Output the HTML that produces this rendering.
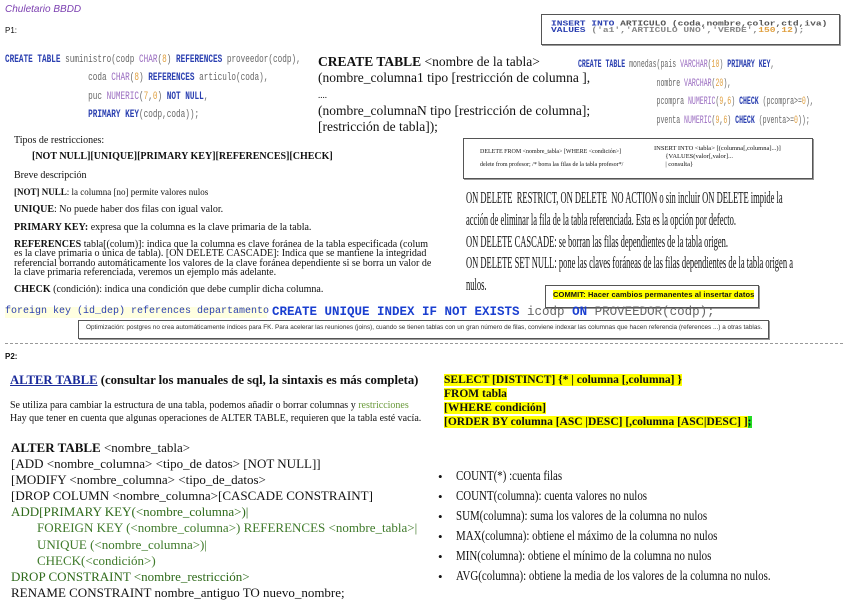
<!DOCTYPE html>
<html><head><meta charset="utf-8"><style>
body{margin:0;width:848px;height:599px;background:#fff;position:relative;overflow:hidden;font-family:"Liberation Serif",serif;color:#111}
.a{position:absolute;white-space:nowrap;line-height:1}
.mono{font-family:"Liberation Mono",monospace}
.sans{font-family:"Liberation Sans",sans-serif}
.kw{color:#2a3fb0;font-weight:bold}
.ty{color:#9a6cc0}
.nu{color:#e0a040}
.cd{color:#666}
.box{position:absolute;border:1px solid #555;box-shadow:1px 1px 0 #999;background:#fff}
.hl{background:#ffff00}
.cond{transform-origin:0 0}
.g1{color:#2e6a1a}.g2{color:#3f7a2a}
</style></head><body>
<div class="a sans" style="left:5px;top:5px;font-size:10px;color:#7b3fb0;font-style:italic">Chuletario BBDD</div>
<div class="a sans" style="left:5px;top:27px;font-size:8px">P1:</div>

<div class="a mono cond cd" style="left:5px;top:51px;font-size:11px;line-height:18.3px;transform:scaleX(0.7)">
<span class="kw">CREATE TABLE</span> suministro(codp <span class="ty">CHAR</span>(<span class="nu">8</span>) <span class="kw">REFERENCES</span> proveedor(codp),<br>
&nbsp;&nbsp;&nbsp;&nbsp;&nbsp;&nbsp;&nbsp;&nbsp;&nbsp;&nbsp;&nbsp;&nbsp;&nbsp;&nbsp;&nbsp;&nbsp;&nbsp;&nbsp;coda <span class="ty">CHAR</span>(<span class="nu">8</span>) <span class="kw">REFERENCES</span> articulo(coda),<br>
&nbsp;&nbsp;&nbsp;&nbsp;&nbsp;&nbsp;&nbsp;&nbsp;&nbsp;&nbsp;&nbsp;&nbsp;&nbsp;&nbsp;&nbsp;&nbsp;&nbsp;&nbsp;puc <span class="ty">NUMERIC</span>(<span class="nu">7</span>,<span class="nu">0</span>) <span class="kw">NOT NULL</span>,<br>
&nbsp;&nbsp;&nbsp;&nbsp;&nbsp;&nbsp;&nbsp;&nbsp;&nbsp;&nbsp;&nbsp;&nbsp;&nbsp;&nbsp;&nbsp;&nbsp;&nbsp;&nbsp;<span class="kw">PRIMARY KEY</span>(codp,coda));</div>

<div class="a" style="left:318px;top:54px;font-size:13.5px;line-height:15.8px">
<b>CREATE TABLE</b> &lt;nombre de la tabla&gt;<br>(nombre_columna1 tipo [restricción de columna ],<br><span style="font-size:9px">....</span><br>(nombre_columnaN tipo [restricción de columna];<br>[restricción de tabla]);</div>

<div class="box" style="left:541px;top:14px;width:297px;height:29px"></div>
<div class="a mono cond" style="left:551px;top:20px;font-size:9.6px;line-height:9px;font-weight:bold;transform:scaleY(0.75)">
<span style="color:#2a3fb0">INSERT INTO</span> <span style="color:#555">ARTICULO (coda,nombre,color,ctd,iva)</span><br><span style="color:#2a3fb0">VALUES</span> <span style="color:#888">('a1','ARTICULO UNO','VERDE',<span class="nu">150</span>,<span class="nu">12</span>);</span></div>

<div class="a mono cond cd" style="left:578px;top:56px;font-size:11px;line-height:18.7px;transform:scaleX(0.595)">
<span class="kw">CREATE TABLE</span> monedas(pais <span class="ty">VARCHAR</span>(<span class="nu">10</span>) <span class="kw">PRIMARY KEY</span>,<br>
&nbsp;&nbsp;&nbsp;&nbsp;&nbsp;&nbsp;&nbsp;&nbsp;&nbsp;&nbsp;&nbsp;&nbsp;&nbsp;&nbsp;&nbsp;&nbsp;&nbsp;&nbsp;&nbsp;&nbsp;nombre <span class="ty">VARCHAR</span>(<span class="nu">20</span>),<br>
&nbsp;&nbsp;&nbsp;&nbsp;&nbsp;&nbsp;&nbsp;&nbsp;&nbsp;&nbsp;&nbsp;&nbsp;&nbsp;&nbsp;&nbsp;&nbsp;&nbsp;&nbsp;&nbsp;&nbsp;pcompra <span class="ty">NUMERIC</span>(<span class="nu">9</span>,<span class="nu">6</span>) <span class="kw">CHECK</span> (pcompra&gt;=<span class="nu">0</span>),<br>
&nbsp;&nbsp;&nbsp;&nbsp;&nbsp;&nbsp;&nbsp;&nbsp;&nbsp;&nbsp;&nbsp;&nbsp;&nbsp;&nbsp;&nbsp;&nbsp;&nbsp;&nbsp;&nbsp;&nbsp;pventa <span class="ty">NUMERIC</span>(<span class="nu">9</span>,<span class="nu">6</span>) <span class="kw">CHECK</span> (pventa&gt;=<span class="nu">0</span>));</div>

<div class="box" style="left:463px;top:138px;width:348px;height:39px"></div>
<div class="a" style="left:480px;top:146px;font-size:6px;line-height:13px">DELETE FROM &lt;nombre_tabla&gt; [WHERE &lt;condición&gt;]<br>delete from profesor; /* borra las filas de la tabla profesor*/</div>
<div class="a" style="left:654px;top:145px;font-size:6.5px;line-height:8px">INSERT INTO &lt;tabla&gt; [(columna[,columna]...)]<br>&nbsp;&nbsp;&nbsp;&nbsp;&nbsp;&nbsp;&nbsp;{VALUES(valor[,valor]...<br>&nbsp;&nbsp;&nbsp;&nbsp;&nbsp;&nbsp;&nbsp;| consulta}</div>

<div class="a" style="left:14px;top:136px;font-size:10px">Tipos de restricciones:</div>
<div class="a" style="left:32px;top:152px;font-size:10px;font-weight:bold">[NOT NULL][UNIQUE][PRIMARY KEY][REFERENCES][CHECK]</div>
<div class="a" style="left:14px;top:171px;font-size:10px">Breve descripción</div>
<div class="a" style="left:14px;top:188px;font-size:9px"><b>[NOT] NULL</b>: la columna [no] permite valores nulos</div>
<div class="a" style="left:14px;top:205px;font-size:10px"><b>UNIQUE</b>: No puede haber dos filas con igual valor.</div>
<div class="a" style="left:14px;top:223px;font-size:10px"><b>PRIMARY KEY:</b> expresa que la columna es la clave primaria de la tabla.</div>
<div class="a" style="left:14px;top:240px;font-size:10px;line-height:9.3px"><b>REFERENCES</b> tabla[(colum)]: indica que la columna es clave foránea de la tabla especificada (colum<br>es la clave primaria o única de tabla). [ON DELETE CASCADE]: Indica que se mantiene la integridad<br>referencial borrando automáticamente los valores de la clave foránea dependiente si se borra un valor de<br>la clave primaria referenciada, veremos un ejemplo más adelante.</div>
<div class="a" style="left:14px;top:285px;font-size:10px"><b>CHECK</b> (condición): indica una condición que debe cumplir dicha columna.</div>

<div class="a cond" style="left:466px;top:187px;font-size:17px;line-height:21.8px;transform:scaleX(0.5)">ON DELETE &nbsp;RESTRICT, ON DELETE &nbsp;NO ACTION o sin incluir ON DELETE impide la<br>acción de eliminar la fila de la tabla referenciada. Esta es la opción por defecto.<br>ON DELETE CASCADE: se borran las filas dependientes de la tabla origen.<br>ON DELETE SET NULL: pone las claves foráneas de las filas dependientes de la tabla origen a<br>nulos.</div>

<div class="box" style="left:545px;top:285px;width:212px;height:21px"></div>
<div class="a sans" style="left:553px;top:291px;font-size:7.5px;font-weight:bold;letter-spacing:0.1px"><span class="hl">COMMIT: Hacer cambios permanentes al insertar datos</span></div>

<div class="a" style="left:5px;top:307px;width:262px;height:11px;background:#ffffe0"></div>
<div class="a mono" style="left:5px;top:307px;font-size:10px;color:#2a3fb0">foreign key (id_dep) references departamento</div>
<div class="a mono" style="left:272px;top:306px;font-size:12.5px;font-weight:bold;color:#1a3fd0">CREATE UNIQUE INDEX IF NOT EXISTS <span style="color:#666;font-weight:normal">icodp</span> ON <span style="color:#666;font-weight:normal">PROVEEDOR(codp);</span></div>
<div class="box" style="left:78px;top:320px;width:689px;height:17px"></div>
<div class="a sans" style="left:86px;top:325px;font-size:6.4px;color:#333">Optimización: postgres no crea automáticamente índices para FK. Para acelerar las reuniones (joins), cuando se tienen tablas con un gran número de filas, conviene indexar las columnas que hacen referencia (references ...) a otras tablas.</div>
<div class="a" style="left:5px;top:343px;width:838px;border-top:1px dashed #999"></div>

<div class="a sans" style="left:5px;top:353px;font-size:8px;font-weight:bold">P2:</div>
<div class="a" style="left:10px;top:374px;font-size:12.7px;font-weight:bold"><span style="color:#1a2a9a;text-decoration:underline">ALTER TABLE</span> (consultar los manuales de sql, la sintaxis es más completa)</div>
<div class="a" style="left:10px;top:399px;font-size:10px;line-height:13px">Se utiliza para cambiar la estructura de una tabla, podemos añadir o borrar columnas y <span style="color:#6a9a3a">restricciones</span><br>Hay que tener en cuenta que algunas operaciones de ALTER TABLE, requieren que la tabla esté vacía.</div>

<div class="a" style="left:11px;top:440px;font-size:13px;line-height:16.1px">
<b>ALTER TABLE</b> &lt;nombre_tabla&gt;<br>[ADD &lt;nombre_columna&gt; &lt;tipo_de datos&gt; [NOT NULL]]<br>[MODIFY &lt;nombre_columna&gt; &lt;tipo_de_datos&gt;<br>[DROP COLUMN &lt;nombre_columna&gt;[CASCADE CONSTRAINT]<br>
<span class="g1">ADD[PRIMARY KEY(&lt;nombre_columna&gt;)|</span><br>
<span class="g2">&nbsp;&nbsp;&nbsp;&nbsp;&nbsp;&nbsp;&nbsp;&nbsp;FOREIGN KEY (&lt;nombre_columna&gt;) REFERENCES &lt;nombre_tabla&gt;|</span><br>
<span class="g2">&nbsp;&nbsp;&nbsp;&nbsp;&nbsp;&nbsp;&nbsp;&nbsp;UNIQUE (&lt;nombre_columna&gt;)|</span><br>
<span class="g2">&nbsp;&nbsp;&nbsp;&nbsp;&nbsp;&nbsp;&nbsp;&nbsp;CHECK(&lt;condición&gt;)</span><br>
<span class="g1">DROP CONSTRAINT &lt;nombre_restricción&gt;</span><br>RENAME CONSTRAINT nombre_antiguo TO nuevo_nombre;</div>

<div class="a" style="left:444px;top:373px;font-size:11.5px;line-height:14px;font-weight:bold">
<span class="hl">SELECT [DISTINCT] {* | columna [,columna] }</span><br><span class="hl">FROM tabla</span><br><span class="hl">[WHERE condición]</span><br><span class="hl">[ORDER BY columna [ASC |DESC] [,columna [ASC|DESC] ]</span><span style="background:#22dd22">;</span></div>

<div class="a" style="left:438px;top:467px;font-size:13px;line-height:20px">•<br>•<br>•<br>•<br>•<br>•</div>
<div class="a cond" style="left:456px;top:467px;font-size:14px;line-height:20px;transform:scaleX(0.78)">COUNT(*) :cuenta filas<br>COUNT(columna): cuenta valores no nulos<br>SUM(columna): suma los valores de la columna no nulos<br>MAX(columna): obtiene el máximo de la columna no nulos<br>MIN(columna): obtiene el mínimo de la columna no nulos<br>AVG(columna): obtiene la media de los valores de la columna no nulos.</div>
</body></html>
